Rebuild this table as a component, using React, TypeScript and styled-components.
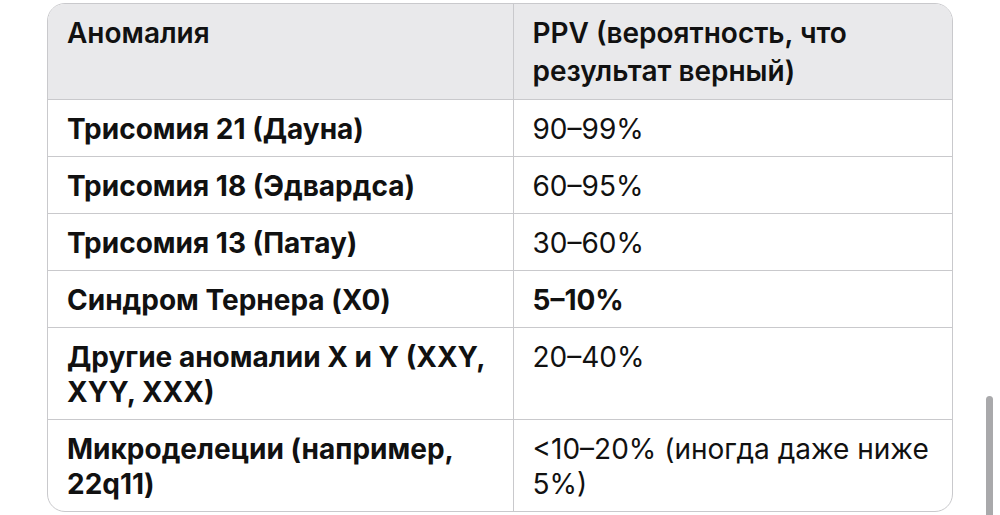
import { createGlobalStyle, styled } from "styled-components";

const GlobalStyle = createGlobalStyle`
  html, body {
    margin: 0;
    padding: 0;
    background: #fff;
  }
  body {
    font-family: Inter, "Noto Sans", "DejaVu Sans", sans-serif;
    color: #111;
    -webkit-font-smoothing: antialiased;
  }
`;

const Page = styled.div`
  position: relative;
  width: 1000px;
  height: 515px;
  overflow: hidden;
  padding: 3px 0 0 47px;
  box-sizing: border-box;
`;

const TableWrap = styled.div`
  width: 906px;
  border: 1px solid #c9c9cc;
  border-radius: 18px;
  overflow: hidden;
  box-sizing: border-box;
`;

const Table = styled.table`
  width: 100%;
  border-collapse: collapse;
  table-layout: fixed;
  font-size: 28px;
  line-height: 35px;
`;

const HeadRow = styled.tr`
  background: #e9e9eb;
`;

const Th = styled.th`
  text-align: left;
  vertical-align: top;
  font-weight: 600;
  line-height: 38px;
  padding: 10px 18px 9px 19px;
  border-bottom: 1px solid #c9c9cc;
  & + & {
    border-left: 1px solid #c9c9cc;
  }
`;

const Row = styled.tr`
  & + & td {
    border-top: 1px solid #c9c9cc;
  }
`;

const Td = styled.td<{ $strong?: boolean }>`
  vertical-align: top;
  padding: 12px 18px 9px 19px;
  font-weight: ${(p) => (p.$strong ? 700 : 400)};
  & + & {
    border-left: 1px solid #c9c9cc;
  }
`;

const Scrollbar = styled.div`
  position: absolute;
  left: 986px;
  top: 396px;
  width: 7px;
  height: 140px;
  border-radius: 4px;
  background: #a9a9ab;
`;

type Item = { name: string; ppv: string; bold?: boolean };

const rows: Item[] = [
  { name: "Трисомия 21 (Дауна)", ppv: "90–99%" },
  { name: "Трисомия 18 (Эдвардса)", ppv: "60–95%" },
  { name: "Трисомия 13 (Патау)", ppv: "30–60%" },
  { name: "Синдром Тернера (X0)", ppv: "5–10%", bold: true },
  { name: "Другие аномалии X и Y (XXY, XYY, XXX)", ppv: "20–40%" },
  { name: "Микроделеции (например, 22q11)", ppv: "<10–20% (иногда даже ниже 5%)" },
];

function App() {
  return (
    <>
      <GlobalStyle />
      <Page>
        <TableWrap>
          <Table>
            <colgroup>
              <col style={{ width: 465 }} />
              <col />
            </colgroup>
            <thead>
              <HeadRow>
                <Th>Аномалия</Th>
                <Th>PPV (вероятность, что результат верный)</Th>
              </HeadRow>
            </thead>
            <tbody>
              {rows.map((r) => (
                <Row key={r.name}>
                  <Td $strong>{r.name}</Td>
                  <Td $strong={r.bold}>{r.ppv}</Td>
                </Row>
              ))}
            </tbody>
          </Table>
        </TableWrap>
        <Scrollbar />
      </Page>
    </>
  );
}

export default App;
